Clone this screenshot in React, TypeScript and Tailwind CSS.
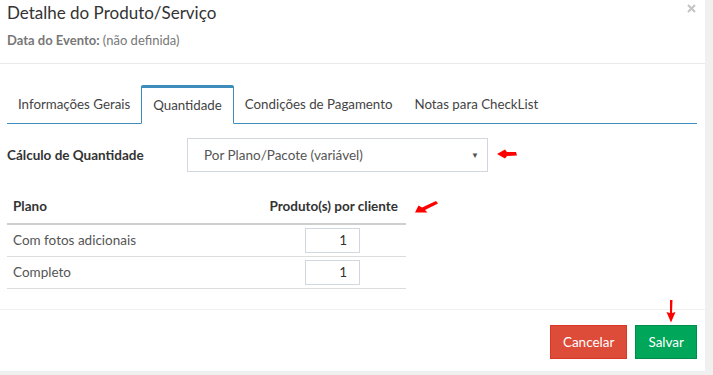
import React from "react";

function ArrowLeft() {
  return (
    <svg width="20" height="10" viewBox="0 0 20 10" className="block">
      <polygon points="0,5 8,0.5 10,3 19,3 20,6.5 10,7 8,9.5" fill="#ff0000" />
    </svg>
  );
}

function ArrowDownLeft() {
  return (
    <svg width="23" height="12" viewBox="0 0 23 12" className="block">
      <polygon points="0,11.5 3.5,4.5 7,6.5 21,0 23,2.5 10,9 12.5,11.5" fill="#ff0000" />
    </svg>
  );
}

function ArrowDown() {
  return (
    <svg width="10" height="23" viewBox="0 0 10 23" className="block">
      <polygon points="4,0 6.5,0 6,13 9.5,12 5,22.5 0.5,12 4,13" fill="#ff0000" />
    </svg>
  );
}

export default function App() {
  const font = { fontFamily: "Lato, 'Open Sans', sans-serif" };
  return (
    <div className="w-[713px] h-[375px] bg-[#f0f0f0] overflow-hidden" style={font}>
      <div className="w-[705px] h-[371px] bg-white flex flex-col">
        {/* header */}
        <div className="h-[64px] border-b border-[#e9e9e9] px-[7px] pt-[1px] relative">
          <div className="text-[17px] text-[#333] leading-[24px]">Detalhe do Produto/Serviço</div>
          <div className="text-[13px] text-[#777] mt-[6px] leading-[18px]">
            <span className="font-bold">Data do Evento:</span> (não definida)
          </div>
          <svg className="absolute right-[9px] top-[4px]" width="9" height="9" viewBox="0 0 9 9">
            <path d="M1 1 L8 8 M8 1 L1 8" stroke="#c4c4c4" strokeWidth="2" />
          </svg>
        </div>
        {/* tabs */}
        <div className="px-[7px] pt-[21px]">
          <div className="flex border-b border-[#3c8dbc] h-[39px] w-[690px] items-end">
            <div className="px-[11px] h-[37px] flex items-center text-[13.3px] text-[#444]">Informações Gerais</div>
            <div className="px-[11px] h-[39px] mb-[-1px] flex items-center text-[13.3px] text-[#444] bg-white border border-[#3c8dbc] border-b-white border-t-[3px] rounded-t-[2px]">Quantidade</div>
            <div className="px-[11px] h-[37px] flex items-center text-[13.3px] text-[#444]">Condições de Pagamento</div>
            <div className="px-[11px] h-[37px] flex items-center text-[13.3px] text-[#444]">Notas para CheckList</div>
          </div>
          {/* form row */}
          <div className="flex items-center mt-[14px] h-[34px]">
            <div className="w-[180px] text-[13.5px] font-bold text-[#333]">Cálculo de Quantidade</div>
            <div className="w-[301px] h-[34px] border border-[#d2d6de] flex items-center justify-between pl-[16px] pr-[8px] text-[13.5px] text-[#555]">
              <span>Por Plano/Pacote (variável)</span>
              <span className="text-[8px] text-[#555]">▼</span>
            </div>
            <div className="ml-[9px] mt-[-2px]"><ArrowLeft /></div>
          </div>
          {/* table */}
          <div className="flex items-start mt-[17px]">
            <div className="w-[399px]">
              <div className="flex items-center justify-between h-[36px] border-b-2 border-[#cfcfcf] px-[6px] text-[13.5px] font-bold text-[#333]">
                <span>Plano</span>
                <span className="pr-[2px]">Produto(s) por cliente</span>
              </div>
              <div className="flex items-center h-[32px] border-b border-[#dcdcdc] px-[6px] text-[13.5px] text-[#555]">
                <span className="flex-1">Com fotos adicionais</span>
                <div className="w-[55px] h-[25px] border border-[#d2d6de] text-right pr-[12px] leading-[23px] text-[#333] mr-[40px]">1</div>
              </div>
              <div className="flex items-center h-[32px] border-b border-[#dcdcdc] px-[6px] text-[13.5px] text-[#555]">
                <span className="flex-1">Completo</span>
                <div className="w-[55px] h-[25px] border border-[#d2d6de] text-right pr-[12px] leading-[23px] text-[#333] mr-[40px]">1</div>
              </div>
            </div>
            <div className="ml-[9px] mt-[12px]"><ArrowDownLeft /></div>
          </div>
        </div>
        {/* footer */}
        <div className="mt-auto border-t border-[#f0f0f0] h-[62px] flex items-start justify-end pr-[8px] pt-[15px] gap-[8px] relative">
          <div className="absolute right-[29px] top-[-10px]"><ArrowDown /></div>
          <div className="h-[34px] px-[12px] flex items-center bg-[#dd4b39] border border-[#d73925] text-white text-[13.5px]">Cancelar</div>
          <div className="h-[34px] px-[12px] flex items-center bg-[#00a65a] border border-[#008d4c] text-white text-[13.5px]">Salvar</div>
        </div>
      </div>
    </div>
  );
}
